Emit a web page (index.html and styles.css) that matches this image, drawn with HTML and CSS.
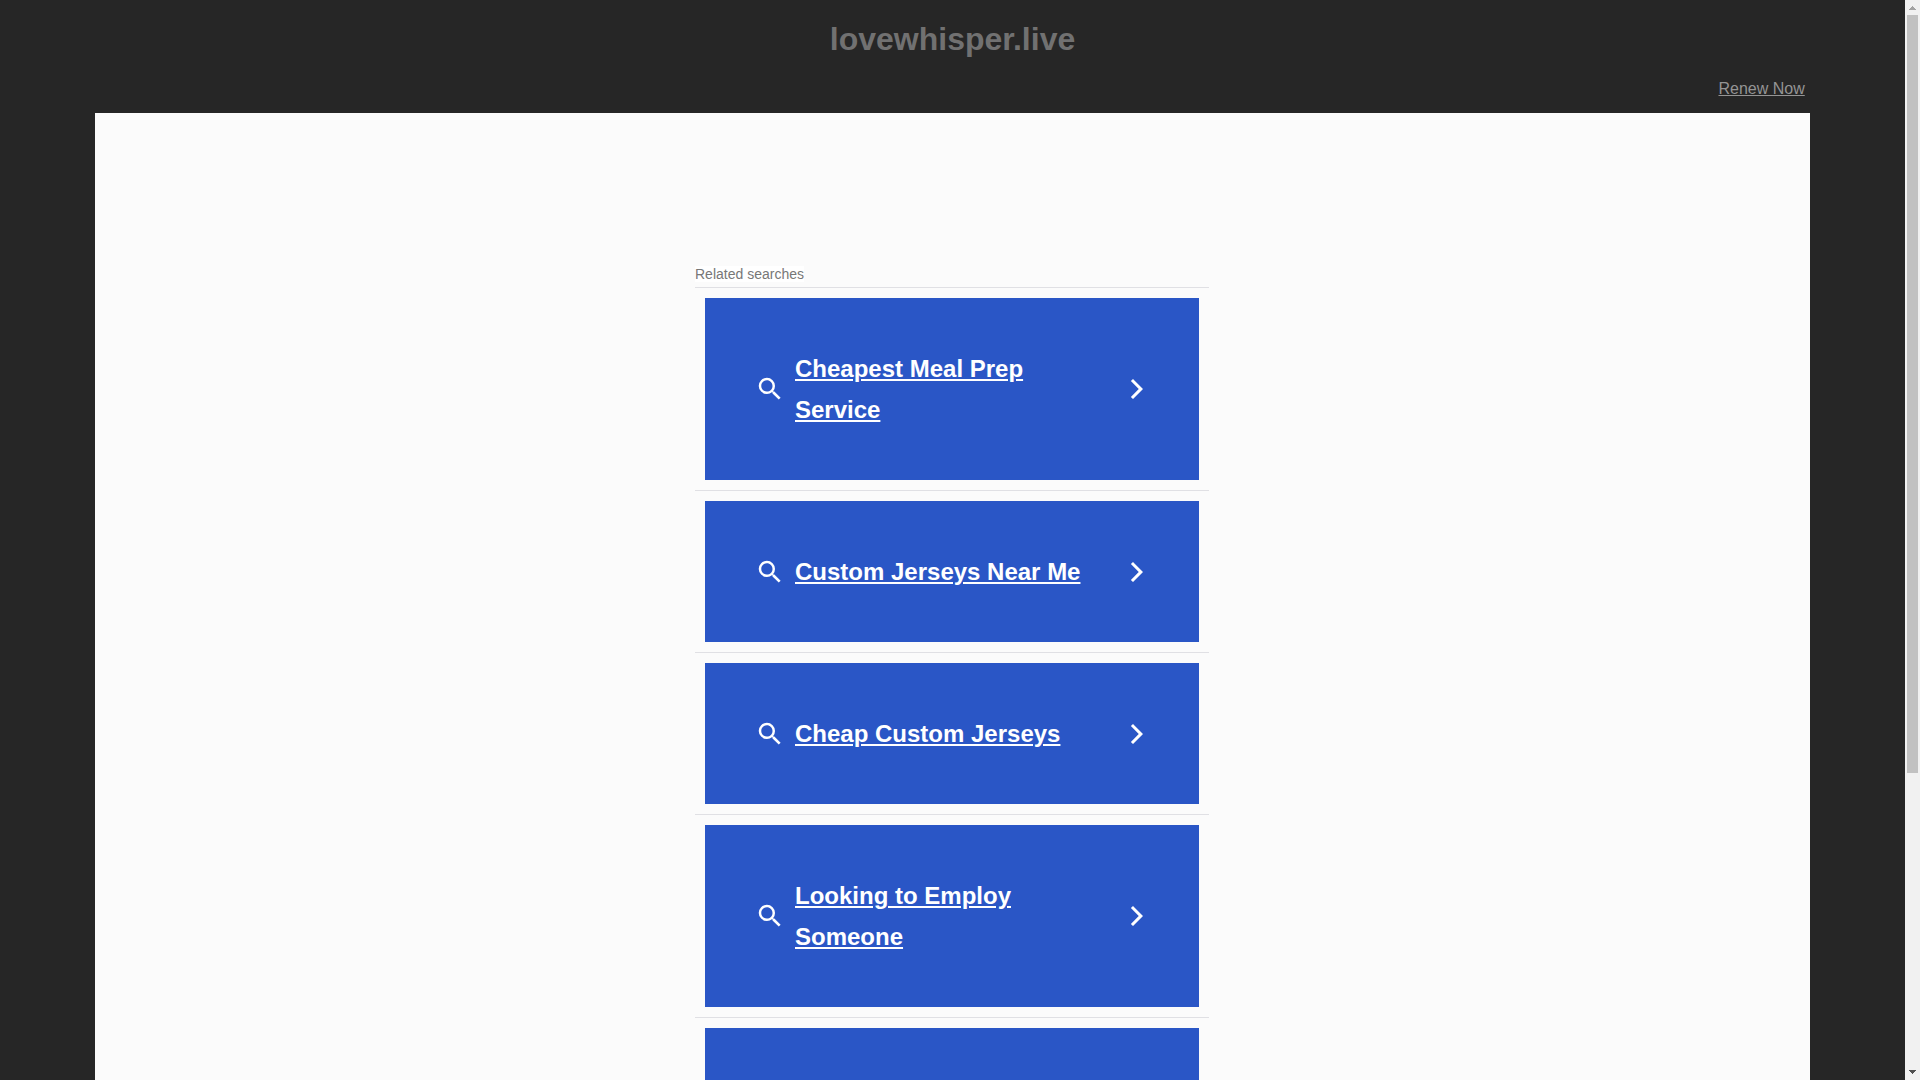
FILE: index.html
```html
<!DOCTYPE html>
<html lang="en">
<head>
<meta charset="utf-8">
<title>lovewhisper.live</title>
<link rel="stylesheet" href="styles.css">
</head>
<body>
<svg class="sprite" aria-hidden="true">
  <symbol id="search" viewBox="0 0 24 24"><path d="M15.5 14h-.79l-.28-.27A6.471 6.471 0 0 0 16 9.5 6.5 6.5 0 1 0 9.5 16c1.61 0 3.09-.59 4.23-1.57l.27.28v.79l5 4.99L20.49 19l-4.99-5zm-6 0C7.01 14 5 11.99 5 9.5S7.01 5 9.5 5 14 7.01 14 9.5 11.99 14 9.5 14z"/></symbol>
  <symbol id="chevron" viewBox="0 0 24 24"><path d="M5.88 4.12L13.76 12l-7.88 7.88L8 22l10-10L8 2z"/></symbol>
</svg>
<div class="shell">
  <div class="view">
    <header class="header">
      <h1 class="domain">lovewhisper.live</h1>
      <div class="renew"><a href="#">Renew Now</a></div>
    </header>
    <main class="panel">
      <section class="related">
        <h2 class="related-title"><span>Related searches</span></h2>
        <ul class="list">
          <li class="item"><a class="card" href="#"><svg class="icon-search"><use href="#search"/></svg><span class="label">Cheapest Meal Prep Service</span><svg class="icon-chevron"><use href="#chevron"/></svg></a></li>
          <li class="item"><a class="card" href="#"><svg class="icon-search"><use href="#search"/></svg><span class="label">Custom Jerseys Near Me</span><svg class="icon-chevron"><use href="#chevron"/></svg></a></li>
          <li class="item"><a class="card" href="#"><svg class="icon-search"><use href="#search"/></svg><span class="label">Cheap Custom Jerseys</span><svg class="icon-chevron"><use href="#chevron"/></svg></a></li>
          <li class="item"><a class="card" href="#"><svg class="icon-search"><use href="#search"/></svg><span class="label">Looking to Employ Someone</span><svg class="icon-chevron"><use href="#chevron"/></svg></a></li>
          <li class="item"><div class="card"></div></li>
        </ul>
      </section>
    </main>
  </div>
  <div class="scrollbar" aria-hidden="true">
    <svg class="arrow arrow-up" viewBox="0 0 7 4" shape-rendering="crispEdges"><path d="M3 0h1v1h1v1h1v1h1v1H0V3h1V2h1V1h1z"/></svg>
    <div class="track"><div class="thumb"></div></div>
    <svg class="arrow arrow-down" viewBox="0 0 7 4" shape-rendering="crispEdges"><path d="M0 0h7v1H6v1H5v1H4v1H3V3H2V2H1V1H0z"/></svg>
  </div>
</div>
</body>
</html>
```
FILE: styles.css
```css
* {
  box-sizing: border-box;
}

body {
  margin: 0;
  background: #262626;
  font-family: "Liberation Sans", Arial, sans-serif;
  font-size: 16px;
}

.sprite {
  display: none;
}

.shell {
  display: grid;
  grid-template-columns: minmax(0, 1fr) 15px;
  height: 100vh;
}

.view {
  overflow: hidden;
}

.header {
  width: 90%;
  margin: 0 auto;
  padding: 20px 5px 14px;
}

.domain {
  margin: 0 0 20px;
  color: #717171;
  font-size: 32px;
  line-height: 38px;
  text-align: center;
}

.renew {
  line-height: 21px;
  text-align: right;
}

.renew a {
  color: #949494;
}

.panel {
  width: 90%;
  margin: 0 auto;
  padding: 153px 20px 20px;
  background: #fbfbfb;
}

.related {
  max-width: 515px;
  margin: 0 auto;
  padding-right: 1px;
}

.related-title {
  margin: 0;
  color: #777;
  font-size: 14px;
  font-weight: 400;
  line-height: 16px;
  padding-bottom: 5px;
}

.related-title span {
  background: #fff;
}

.list {
  margin: 0;
  padding: 0;
  list-style: none;
}

.item {
  padding: 10px;
  border-top: 1px solid #e0e0e4;
}

.card {
  display: flex;
  align-items: center;
  gap: 10px;
  padding: 50px;
  background: #2a56c6;
  color: #fff;
  font-size: 24px;
  font-weight: 700;
  line-height: 41px;
}

a.card {
  text-decoration: none;
}

.label {
  flex: 1;
  text-decoration: underline;
}

.icon-search {
  flex: none;
  width: 30px;
  height: 30px;
  fill: currentColor;
}

.icon-chevron {
  flex: none;
  width: 24px;
  height: 24px;
  fill: currentColor;
}

.scrollbar {
  display: flex;
  flex-direction: column;
  align-items: center;
  padding: 6px 0;
  background: #f1f1f1;
}

.arrow {
  flex: none;
  width: 7px;
  height: 4px;
}

.arrow-up {
  fill: #a3a3a3;
}

.arrow-down {
  fill: #505050;
}

.track {
  flex: 1;
  width: 11px;
  margin: 5px 0;
}

.thumb {
  height: 72.2%;
  background: #c1c1c1;
}
```
